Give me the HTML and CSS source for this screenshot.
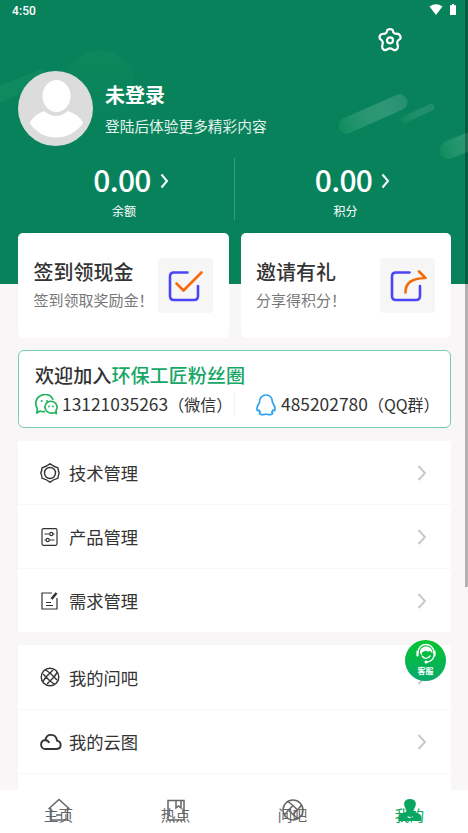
FILE: index.html
```html
<!DOCTYPE html>
<html lang="zh-CN">
<head>
<meta charset="utf-8">
<title>我的</title>
<link rel="stylesheet" href="styles.css">
</head>
<body>
<div class="screen">
  <header class="hero">
    <svg class="decor" width="468" height="284" viewBox="0 0 468 284">
      <defs>
        <linearGradient id="fade"><stop offset="0" stop-color="#12985f" stop-opacity=".45"/><stop offset="1" stop-color="#ffffff" stop-opacity=".11"/></linearGradient>
        <linearGradient id="faint"><stop offset="0" stop-color="#12985f" stop-opacity=".25"/><stop offset="1" stop-color="#ffffff" stop-opacity=".09"/></linearGradient>
        <linearGradient id="orb" x2="0" y2="1"><stop offset="0" stop-color="#118c5c" stop-opacity=".5"/><stop offset="1" stop-color="#11915c" stop-opacity="0"/></linearGradient>
      </defs>
      <circle cx="100" cy="85" r="35" fill="url(#orb)"/>
      <path d="M0 85 L42 69 L50 80 L0 103Z" fill="#149060" opacity=".6"/>
      <rect x="336" y="106" width="74" height="16" rx="8" fill="url(#fade)" transform="rotate(-24 373 114)"/>
      <rect x="399" y="110" width="37" height="7" rx="3.500" fill="url(#faint)" transform="rotate(-25 418 114)"/>
      <rect x="438" y="133" width="60" height="18" rx="9" fill="url(#fade)" transform="rotate(-22 468 142)"/>
    </svg>
    <div class="status">
      <span>4:50</span>
      <svg width="28" height="12" viewBox="0 0 28 12" fill="#fff"><path d="M.5 2.500Q7-2 13.500 2.500L7 11Z"/><path d="M21 1.300h2V0h2v1.300h2V11h-6Z"/></svg>
    </div>
    <div class="tools">
      <svg width="24" height="24" viewBox="0 0 24 24" fill="none" stroke="#fff" stroke-width="2.200" stroke-linejoin="round"><path d="M9 3Q9.300 1.200 12 1.200T15 3Q15.300 5.800 18 5.800Q21 5.300 22.200 8T21 11.700Q18.500 13.500 19.500 16.500Q20.800 20 18.500 21.500T14.800 21.400Q12 19.300 9.200 21.400Q7.500 23 5.500 21.500T4.500 16.500Q5.500 13.500 3 11.700Q.8 10.500 1.800 8T6 5.800Q8.700 5.800 9 3Z"/><circle cx="12" cy="12.300" r="3"/></svg>
    </div>
    <div class="profile">
      <svg class="avatar" width="75" height="75" viewBox="0 0 75 75"><circle cx="37.500" cy="37.500" r="37.500" fill="#dcdcdc"/><ellipse cx="38.500" cy="25" rx="14" ry="16" fill="#fff"/><path d="M11.500 52Q17 43 26 40Q38 50 50 40Q60 43 65.500 52Q54 66.500 38 66.500T11.500 52Z" fill="#fff"/></svg>
      <div><h1>未登录</h1><p>登陆后体验更多精彩内容</p></div>
    </div>
    <div class="stats">
      <div class="stat"><div class="amount">0.00<svg width="9" height="16" viewBox="0 0 9 16"><path d="M1.500 1.500L7 8L1.500 14.500" fill="none" stroke="#fff" stroke-width="2"/></svg></div><span>余额</span></div>
      <div class="stat"><div class="amount">0.00<svg width="9" height="16" viewBox="0 0 9 16"><path d="M1.500 1.500L7 8L1.500 14.500" fill="none" stroke="#fff" stroke-width="2"/></svg></div><span>积分</span></div>
    </div>
  </header>

  <main class="content">
    <section class="promos">
      <div class="promo">
        <div><h2>签到领现金</h2><p>签到领取奖励金！</p></div>
        <svg class="tile" width="55" height="55" viewBox="0 0 55 55" fill="none" stroke-width="2.600" stroke-linecap="round" stroke-linejoin="round"><path stroke="#4b45f5" d="M29.500 14.500H16Q12 14.500 12 18.500V38Q12 42 16 42H36Q40 42 40 38V28"/><path stroke="#f56a0b" d="M18.500 25.500L25.500 32.500L43.500 14.500"/></svg>
      </div>
      <div class="promo">
        <div><h2>邀请有礼</h2><p>分享得积分！</p></div>
        <svg class="tile" width="55" height="55" viewBox="0 0 55 55" fill="none" stroke-width="2.600" stroke-linecap="round" stroke-linejoin="round"><path stroke="#4b45f5" d="M29.500 14.500H16Q12 14.500 12 18.500V38Q12 42 16 42H36Q40 42 40 38V28"/><path stroke="#f56a0b" d="M25.500 34.500C25.500 25 31 20.500 45.500 20L39 13.500"/></svg>
      </div>
    </section>

    <section class="contact">
      <h3>欢迎加入<b>环保工匠粉丝圈</b></h3>
      <div class="accounts">
        <div class="account wechat">
          <svg width="23" height="21" viewBox="0 0 23 21" fill="none" stroke="#20b45e" stroke-width="1.700" stroke-linejoin="round"><path d="M10 17.500Q7 18 5 17L1.800 19L2.300 14.500C-.5 10 .8 4.500 4.500 2.300C9-.8 16-.2 18 6"/><path d="M20 18.500L21.300 19.500L21 16.500C23 13.500 22 9.500 18.800 8C14.500 6 10.300 8.500 10 12.300C9.800 17.500 14.800 20.500 20 18.500Z"/><g fill="#20b45e" stroke="none"><circle cx="6.700" cy="7" r="1"/><circle cx="12" cy="7" r="1"/><circle cx="14" cy="12.500" r=".9"/><circle cx="18" cy="12.500" r=".9"/></g></svg>
          <span>13121035263<small>（微信）</small></span>
        </div>
        <div class="account">
          <svg width="20" height="22" viewBox="0 0 20 22" fill="none" stroke="#2ba2ed" stroke-width="1.700" stroke-linejoin="round"><path d="M3.500 8.500C3.500 4 6 1 10 1S16.500 4 16.500 8.500C18.500 11.500 19.500 15 18.700 16.500Q18.200 17.200 17 16Q16.700 17 15.800 18Q17.500 19.500 15.500 20.300Q12 21 10 20Q8 21 4.500 20.300Q2.500 19.500 4.200 18Q3.300 17 3 16Q1.800 17.200 1.300 16.500C.5 15 1.500 11.500 3.500 8.500Z"/></svg>
          <span>485202780<small>（QQ群）</small></span>
        </div>
      </div>
    </section>

    <section class="menu">
      <div class="row"><svg class="icon" viewBox="0 0 20 20"><path d="M10 .7Q12.500 3 18 4.800Q18 7.500 19.200 10Q18 12.500 18 15.200Q12.500 17 10 19.300Q7.500 17 2 15.200Q2 12.500 .8 10Q2 7.500 2 4.800Q7.500 3 10 .7Z" stroke-linejoin="round"/><circle cx="10" cy="10" r="5.500"/></svg><span>技术管理</span><svg class="arrow" viewBox="0 0 10 16"><path d="M1.500 1L8 8L1.500 15"/></svg></div>
      <div class="row"><svg class="icon thin" viewBox="0 0 20 20"><rect x="2" y="1.700" width="15" height="16.600" rx="1.500"/><path d="M4.500 7H9.500M13 7H14.500M4.500 13H6M9.500 13H14.500"/><circle cx="11.300" cy="7" r="1.600"/><circle cx="7.700" cy="13" r="1.600"/></svg><span>产品管理</span><svg class="arrow" viewBox="0 0 10 16"><path d="M1.500 1L8 8L1.500 15"/></svg></div>
      <div class="row"><svg class="icon thin" viewBox="0 0 20 20"><path d="M12 2H2V18H17V7M6 11.500H11M6 14.500H13"/><path d="M11.500 8L16.500 2" stroke-width="2.600"/></svg><span>需求管理</span><svg class="arrow" viewBox="0 0 10 16"><path d="M1.500 1L8 8L1.500 15"/></svg></div>
    </section>

    <section class="menu mine">
      <div class="row"><svg class="icon" viewBox="0 0 20 20"><circle cx="10" cy="10" r="8.800"/><path d="M10 6L14 10L10 14L6 10ZM10 6L5 2.500M14 10L17.500 5M10 14L15 17.500M6 10L2.500 15M10 6L13 3M14 10L17 13M10 14L7 17M6 10L3 7"/></svg><span>我的问吧</span><svg class="arrow" viewBox="0 0 10 16"><path d="M1.500 1L8 8L1.500 15"/></svg></div>
      <div class="row"><svg class="icon cloud" viewBox="0 0 22 20"><path d="M5.500 17H16C22 17 22 10 17 8.700C16 1 6.500 1 5.500 8C-.5 8.500-.2 17 5.500 17M5.500 8.300Q8.500 8.500 9 11"/></svg><span>我的云图</span><svg class="arrow" viewBox="0 0 10 16"><path d="M1.500 1L8 8L1.500 15"/></svg></div>
      <div class="row"></div>
    </section>
  </main>

  <div class="service">
    <svg width="22" height="22" viewBox="0 0 22 22" fill="none" stroke="#fff"><path d="M3 10C3-1.500 19-1.500 19 10" stroke-width="1.500"/><path d="M5 10C4 2 17 1 17.500 9.500Q17 11 15.500 8Q12 9 10.500 7.500Q8.500 9 7 9Q6.500 12 7.500 13.500Z" fill="#fff" stroke="none"/><path d="M2.500 8.500V12.500M19.500 8.500V12.500" stroke-width="2.200" stroke-linecap="round"/><path d="M7 13Q11 18 15.500 12.500M19 13Q17.500 18.500 12 19" stroke-width="1.300"/><circle cx="11" cy="19" r="1.500" fill="#fff" stroke="none"/></svg>
    <span>客服</span>
  </div>

  <nav class="tabs">
    <div class="tab"><svg width="24" height="24" viewBox="0 0 24 24"><path d="M1.500 11L12 1.500L22.500 11M3.500 10V22H20.500V10M9 17H15"/></svg><span>主页</span></div>
    <div class="tab"><svg width="24" height="24" viewBox="0 0 24 24"><path d="M4 2.500H20V22H4ZM12 3V10L14.500 8L17 10V3"/></svg><span>热点</span></div>
    <div class="tab"><svg width="24" height="24" viewBox="0 0 24 24"><circle cx="12" cy="12" r="10"/><path d="M12 7.500L16.500 12L12 16.500L7.500 12ZM12 7.500L7 3.500M16.500 12L20.500 7M12 16.500L17 20.500M7.500 12L3.500 17"/></svg><span>问吧</span></div>
    <div class="tab active"><svg width="24" height="24" viewBox="0 0 24 24"><path d="M12 1C4.500 1 5 8.500 9 12Q9 14 5 15Q.5 16.500 .5 19V23H23.500V19Q23.500 16.500 19 15Q15 14 15 12C19 8.500 19.500 1 12 1Z"/><path class="smile" d="M9.500 18.500Q12 20.500 14.500 18.500"/></svg><span>我的</span></div>
  </nav>
  <div class="scrollbar"></div>
</div>
</body>
</html>
```
FILE: styles.css
```css
* { box-sizing: border-box; }
body, h1, h2, h3, p { margin: 0; }
body { font-family: "Noto Sans CJK SC", sans-serif; color: #333; }
svg { display: block; flex: none; }
.screen { position: relative; height: 833px; overflow: hidden; background: #f8f6f7; }
.hero { position: relative; height: 284px; background: #08825b; color: #fff; }
.decor { position: absolute; top: 0; left: 0; }
.status, .tools, .profile, .stats { position: relative; }
.status { display: flex; justify-content: space-between; height: 22px; padding: 4px 11px 0 12px; font: 500 12px/14px Roboto, sans-serif; letter-spacing: .1px; }
.tools { display: flex; justify-content: flex-end; height: 49px; padding: 6px 66px 0 0; }
.profile { display: flex; gap: 12px; height: 87px; padding-left: 18px; }
.profile h1 { font-size: 20px; line-height: 28px; font-weight: 700; margin-top: 10px; }
.profile p { font-size: 14.7px; line-height: 22px; margin-top: 6px; color: #e4f3ed; white-space: nowrap; }
.stats { display: flex; padding-left: 14px; }
.stat { flex: 0 0 221px; height: 62px; text-align: center; font-size: 12px; line-height: 17px; }
.stat:first-child { border-right: 1px solid #389b7a; }
.amount { display: flex; align-items: center; justify-content: center; gap: 9px; height: 43px; padding-left: 14px; margin-bottom: 1px; font-size: 30px; font-weight: 500; letter-spacing: -.7px; }
.amount svg { margin-top: 2px; }
.content { position: relative; margin-top: -51px; padding: 0 17px 0 18px; }
.promos { display: flex; gap: 12px; }
.promo { display: flex; justify-content: space-between; flex: 1; height: 105px; padding: 25px 16px 0 15.500px; background: #fff; border-radius: 5px; white-space: nowrap; }
.promo > div { width: 0; }
.promo h2 { font-size: 20px; line-height: 28px; font-weight: 500; }
.promo p { font-size: 15px; line-height: 24px; margin-top: 2px; color: #777; }
.tile { background: #f6f6f6; border-radius: 4px; }
.contact { height: 78px; margin-top: 12px; padding: 10px 0 0 16px; background: #fff; border: 1px solid #7acbb1; border-radius: 6px; }
.contact h3 { font-size: 19.100px; line-height: 28px; font-weight: 500; }
.contact b { font-weight: 500; color: #16a765; }
.accounts { display: flex; height: 29px; align-items: center; font-size: 17.400px; white-space: nowrap; }
.accounts small { font-size: 16px; }
.account { display: flex; align-items: center; gap: 5px; }
.account svg { position: relative; top: 1px; }
.wechat { width: 200px; height: 24px; border-right: 1px solid #f2f2f2; margin-right: 21px; gap: 4px; }
.menu { margin-top: 13px; background: #fff; }
.row { display: flex; align-items: center; height: 64px; padding: 0 24px 0 22px; font-size: 17.300px; border-top: 1px solid #f7f7f7; }
.row:first-child { height: 63px; border-top: 0; }
.mine .row:first-child { height: 64px; }
.icon { width: 20px; height: 20px; margin-right: 9px; fill: none; stroke: #333; stroke-width: 1.400; }
.thin { stroke-width: 1.200; }
.cloud { width: 22px; margin-right: 7px; stroke-width: 1.900; }
.arrow { width: 10px; height: 16px; margin-left: auto; fill: none; stroke: #c8c8c8; stroke-width: 1.900; }
.service { position: absolute; left: 405px; top: 640px; width: 41px; height: 41px; border-radius: 50%; display: flex; flex-direction: column; align-items: center; padding-top: 3px; background: linear-gradient(#05c52f, #07a96c); color: #fff; font-size: 8px; line-height: 11px; font-weight: 700; }
.tabs { position: absolute; left: 0; right: 0; bottom: 0; height: 43px; display: flex; background: #fff; }
.tab { flex: 1; display: grid; justify-items: center; color: #666; font-size: 14.700px; line-height: 20px; }
.tab svg, .tab span { grid-area: 1 / 1; }
.tab svg { margin-top: 8px; fill: none; stroke: #666; stroke-width: 1.500; }
.tab span { margin-top: 15px; }
.active { color: #08a660; }
.active svg { fill: #08a660; stroke: none; }
.active .smile { fill: none; stroke: #fff; stroke-width: 1.200; }
.scrollbar { position: absolute; right: 0; top: 0; width: 3px; height: 587px; background: rgba(0, 0, 0, .28); }
```
